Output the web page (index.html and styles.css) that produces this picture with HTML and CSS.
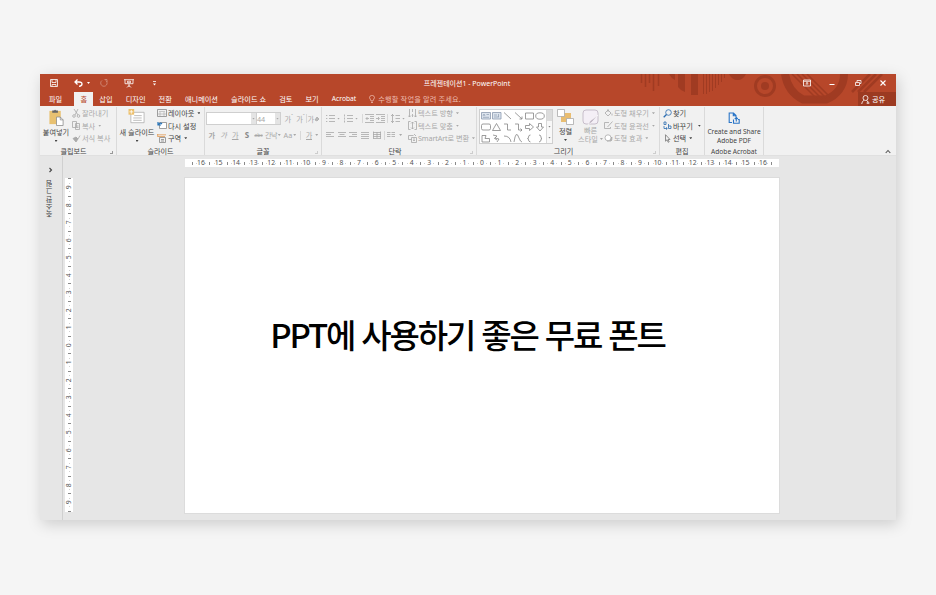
FILE: index.html
```
<!DOCTYPE html>
<html lang="ko">
<head>
    <meta charset="UTF-8">
    <meta name="viewport" content="width=device-width, initial-scale=1.0">
    <title>프레젠테이션1 - PowerPoint</title>
    <link rel="stylesheet" href="styles.css">
</head>
<body>
    <div class="window">
        <header class="header">
            <svg class="art" viewBox="0 0 260 32" width="260" height="32">
                <path d="M5.500 0v9M9.500 0v13M13.500 0v9M17.500 0v17M22.500 0v12" stroke-width="1.500"/>
                <path d="M33 0h6v6q-4-2-6-6zM42 0h7v18q-5-2-7-5zM55 0h7v21h-7z" class="fill"/>
                <path d="M67.500 0v20M70.500 0v20M73.500 0v18M76.500 0v17M79.500 0v14M82.500 0v11M85.500 0v8M88.500 0v4" stroke-width="1"/>
                <path d="M93 0h17q-3 6-8.500 6T93 0z" class="fill"/>
                <circle cx="129" cy="12" r="9.500" stroke-width="3"/>
                <circle cx="129" cy="12" r="4" class="fill"/>
                <path d="M149 0C151 13 158 21 167 25.500H190C201 21 208 12 208 0" stroke-width="8"/>
                <path d="M156 0l25 25M161 0l25 25M166 0l24 24M171 0l23 23" stroke-width="1.500"/>
                <path d="M216 18L234 0M222 18L240 0M228 18L246 0" stroke-width="2.500"/>
            </svg>
            <div class="titlebar">
                <div class="quick">
                    <svg width="8" height="8" viewBox="0 0 8 8"><path d="M.5.500h7v7h-7zM2 .5V3.500h4V.5M2 7.500V5.500h4v2"/></svg>
                    <svg class="undo" width="9" height="8" viewBox="0 0 9 8"><path d="M3.500.500L1 3l2.500 2.500M1 3h4q3 0 3 2t-3 2.300" stroke-width="1.300"/></svg>
                    <i class="caret"></i>
                    <svg class="redo faded" width="8" height="8" viewBox="0 0 8 8"><path d="M5.500 1.300A3.200 3.200 0 1 1 2 1.500M4.500.500h2.500v2.500"/></svg>
                    <svg class="show" width="10" height="9" viewBox="0 0 10 9"><path d="M0 .7h10M1 .7v4h8v-4M5 5v3M3 8.500l2-2 2 2M3.500 2.200h3v1.500h-3z"/></svg>
                    <svg width="3" height="5" viewBox="0 0 3 5"><path d="M0 .5h3"/><path d="M0 2.500h3L1.500 4.500z" fill="#fff" stroke="none"/></svg>
                </div>
                <div class="title">프레젠테이션1 - PowerPoint</div>
                <div class="controls">
                    <svg width="8" height="8" viewBox="0 0 8 8"><path d="M.5 1h7v6h-7zM.5 2.300h7M4 6V3.500M2.700 4.700L4 3.500l1.300 1.200"/></svg>
                    <svg width="8" height="8" viewBox="0 0 8 8"><path d="M1.500 5.500h5" stroke-width="1"/></svg>
                    <svg width="8" height="8" viewBox="0 0 8 8"><path d="M1.500 3.500h4v3h-4zM3 3V1.500h4v3H6"/></svg>
                    <svg width="8" height="8" viewBox="0 0 8 8"><path d="M1.500 1.500l5 5M6.500 1.500l-5 5" stroke-width="1.100"/></svg>
                </div>
            </div>
            <nav class="tabs">
                <span>파일</span>
                <span class="active">홈</span>
                <span>삽입</span>
                <span>디자인</span>
                <span>전환</span>
                <span>애니메이션</span>
                <span>슬라이드 쇼</span>
                <span>검토</span>
                <span>보기</span>
                <span class="latin">Acrobat</span>
                <span class="tell"><svg width="6" height="9" viewBox="0 0 6 9"><path d="M2 6Q2 5 1.200 4.200A2.400 2.400 0 1 1 4.800 4.200Q4 5 4 6zM2 7.500h2"/></svg>수행할 작업을 알려 주세요.</span>
                <span class="share"><svg width="9" height="9" viewBox="0 0 9 9"><circle cx="4.500" cy="3" r="2.500"/><path d="M.7 9Q1 6 3.200 5.200M5.500 5.200L7 7M5.500 8h3M7 6.500v3"/></svg>공유</span>
            </nav>
        </header>

        <div class="ribbon">
            <section class="group clipboard">
                <div class="body">
                    <div class="big paste">
                        <svg width="17" height="18" viewBox="0 0 17 18"><path d="M1 2h12v14H1z" fill="#e8c171" stroke="none"/><path d="M4 1.500h2Q7 0 8 1.500h2v2.500H4z" fill="#666" stroke="none"/><path d="M8.500 8.500h4l3 3v6h-7z" fill="#fff" stroke="#888" stroke-width=".8"/><path d="M12.500 8.500v3h3" stroke="#888" stroke-width=".8" fill="none"/></svg>
                        <b>붙여넣기</b><i class="caret"></i>
                    </div>
                    <div class="rows dim">
                        <span><svg width="9" height="9" viewBox="0 0 9 9"><path d="M2 0l4 6M6 0L3 6"/><circle cx="2" cy="7" r="1.300"/><circle cx="6.500" cy="7" r="1.300"/></svg>잘라내기</span>
                        <span><svg width="9" height="9" viewBox="0 0 9 9"><path d="M.5.500h4v6h-4zM3.500 2.500h4v6h-4zM4.500 5h2M4.500 6.500h2"/></svg>복사 <i class="caret"></i></span>
                        <span><svg width="9" height="9" viewBox="0 0 9 9"><path d="M4 3l2 2 2-3.500"/><path d="M1 4.500l3-1.500 2 2-2 3z" fill="#aaa"/></svg>서식 복사</span>
                    </div>
                </div>
                <div class="label">클립보드<i class="launch"></i></div>
            </section>

            <section class="group slides">
                <div class="body">
                    <div class="big newslide">
                        <svg width="18" height="18" viewBox="0 0 18 18"><path d="M2.500 3.500h14v11h-14z" fill="#fff" stroke="#aaa"/><path d="M6 7h8M5 9.500h9M5 12h9" stroke="#aaa" fill="none"/><path d="M0 0h6v6H0z" fill="#edc06c" stroke="none"/><path d="M3 1v4M1 3h4" stroke="#fff"/></svg>
                        <b>새 슬라이드</b><i class="caret"></i>
                    </div>
                    <div class="rows">
                        <span><svg width="10" height="9" viewBox="0 0 10 9"><path d="M.5.500h9v7h-9z" stroke="#888"/><path d="M2 2.500h6M2 4h2v2H2zM6 4h2v2H6z" stroke="#aaa" stroke-width=".6"/></svg>레이아웃<i class="caret"></i></span>
                        <span><svg width="10" height="9" viewBox="0 0 10 9"><path d="M2.500 1.500h7v6h-7z" fill="#fff" stroke="#888"/><path d="M1 1v3h3M1 4Q3 1 5 3" stroke="#2472b8" stroke-width="1.200"/></svg>다시 설정</span>
                        <span><svg width="10" height="9" viewBox="0 0 10 9"><path d="M2.500 3.500h6v5h-6zM4 5.500h3M4 7h3" stroke="#888"/><path d="M0 .8h9M.7 0v3M1 2.500h7" stroke="#e09b55"/></svg>구역<i class="caret"></i></span>
                    </div>
                </div>
                <div class="label">슬라이드</div>
            </section>

            <section class="group font">
                <div class="body stack">
                    <div class="line">
                        <div class="select family"><i class="caret"></i></div>
                        <div class="select size">44<i class="caret"></i></div>
                        <span class="tool grow">가<sup>ˆ</sup></span>
                        <span class="tool shrink">가<sup>ˇ</sup></span>
                        <i class="rule"></i>
                        <span class="tool clear">가<svg width="6" height="6" viewBox="0 0 6 6"><path d="M1 4l2-3 2 2-2 2z" fill="#bbb"/></svg></span>
                    </div>
                    <div class="line second">
                        <span class="tool strong">가</span>
                        <span class="tool italic">가</span>
                        <span class="tool under">가</span>
                        <span class="tool shadow">S</span>
                        <span class="tool strike">abc</span>
                        <span class="tool wide kern">간낙<i class="caret"></i></span>
                        <span class="tool wide case">Aa<i class="caret"></i></span>
                        <i class="rule"></i>
                        <span class="tool wide color"><u>가</u><i class="caret"></i></span>
                    </div>
                </div>
                <div class="label">글꼴<i class="launch pale"></i></div>
            </section>

            <section class="group paragraph">
                <div class="body">
                    <div class="stack">
                        <div class="line">
                            <svg class="list" width="9" height="9" viewBox="0 0 9 9"><path d="M3 1.500h6M3 4.500h6M3 7.500h6M0 1.500h1.300M0 4.500h1.300M0 7.500h1.300"/></svg><i class="caret"></i>
                            <svg class="list" width="9" height="9" viewBox="0 0 9 9"><path d="M3 1.500h6M3 4.500h6M3 7.500h6M.5.500v2M.5 3.500v2M.5 6.500v2"/></svg><i class="caret"></i>
                            <i class="rule"></i>
                            <svg class="indent" width="9" height="9" viewBox="0 0 9 9"><path d="M0 .5h9M5 2.500h4M5 4.500h4M5 6.500h4M0 8.500h9M4 4.500H1M2.500 3L1 4.500 2.500 6"/></svg>
                            <svg class="indent" width="9" height="9" viewBox="0 0 9 9"><path d="M0 .5h9M5 2.500h4M5 4.500h4M5 6.500h4M0 8.500h9M0 4.500h3M2 3l1.500 1.500L2 6"/></svg>
                            <i class="rule"></i>
                            <svg class="spacing" width="9" height="9" viewBox="0 0 9 9"><path d="M4.500 1.500H9M4.500 4.500H9M4.500 7.500H9M1.500 0v9M0 2L1.500.500 3 2M0 7l1.500 1.500L3 7"/></svg><i class="caret"></i>
                        </div>
                        <div class="line second aligns">
                            <svg width="8" height="8" viewBox="0 0 8 8"><path d="M0 1.500h8M0 3.500h5M0 5.500h8"/></svg>
                            <svg width="8" height="8" viewBox="0 0 8 8"><path d="M0 1.500h8M1.500 3.500h5M0 5.500h8"/></svg>
                            <svg width="8" height="8" viewBox="0 0 8 8"><path d="M0 1.500h8M3 3.500h5M0 5.500h8"/></svg>
                            <svg width="8" height="8" viewBox="0 0 8 8"><path d="M0 1.500h8M0 3.500h8M0 5.500h8M0 7.500h8"/></svg>
                            <svg width="8" height="8" viewBox="0 0 8 8"><path d="M.5.500v7M7.500.500v7M0 1.500h8M0 3.500h8M0 5.500h8M0 7.500h8M4 1v6"/></svg>
                            <i class="rule"></i>
                            <svg width="8" height="8" viewBox="0 0 8 8"><path d="M0 1.500h3.500M4.500 1.500H8M0 3.500h3.500M4.500 3.500H8M0 5.500h3.500M4.500 5.500H8"/></svg><i class="caret"></i>
                        </div>
                    </div>
                    <div class="rows dim">
                        <span><svg width="9" height="9" viewBox="0 0 9 9"><path d="M1.500 0v8M0 6.500L1.500 8 3 6.500M4.500 0v3M7.500 0v8M4.500 5v3M6 6.500L7.500 8 9 6.500"/></svg>텍스트 방향<i class="caret"></i></span>
                        <span><svg width="9" height="9" viewBox="0 0 9 9"><path d="M2.500.500h-2v8h2M6.500.500h2v8h-2M4.500 1v7M3 2.500L4.500 1 6 2.500M3 6.500L4.500 8 6 6.500"/></svg>텍스트 맞춤<i class="caret"></i></span>
                        <span class="smart"><svg width="9" height="9" viewBox="0 0 9 9"><path d="M.5 1.500h5M.5 1.500v4h3M3.500 3.500h5v5h-5zM5 5h2M5 6.500h2M6 0l2 2"/></svg>SmartArt로 변환<i class="caret"></i></span>
                    </div>
                </div>
                <div class="label">단락<i class="launch pale"></i></div>
            </section>

            <section class="group drawing">
                <div class="body">
                    <div class="gallery">
                        <svg width="66" height="34" viewBox="0 0 66 34">
                            <path d="M1.500 2.500h9v6.500h-9zM12.500 2.500h8.500v6.500h-8.500z" fill="#dce4ee" stroke="#8b9bb0"/>
                            <path d="M3 6l1-2 1 2M6.500 4.500h2.500M3 7.300h6M14 5h3M14 7h5M18.500 4v3" stroke="#8b9bb0" stroke-width=".7"/>
                            <path d="M24 2.500l7 6.500M35 2.500l7 6.500M42 6.500V9h-2.500M45.500 3h8v6h-8z"/>
                            <ellipse cx="60" cy="6" rx="4.300" ry="3.200"/>
                            <rect x="1.500" y="14" width="9" height="6" rx="1.500"/>
                            <path d="M16.500 13.500l4 7h-8zM24 14h3.500v6H31M35 14h3.500v6H42M40.500 18.500L42 20l-1.500 1.500M45.500 15.500h4v-2l4 3.500-4 3.500v-2h-4zM58.500 13.500h3v3.500h2l-3.500 4-3.500-4h2z"/>
                            <path d="M2 25.500h4l-1 3h4.500V32H2zM13 25l4 1-2 2 4 1-2 3M14 28l3 2M24 26q6 0 7 6M34 32q2-13 5-4 1.500 4 3 4M50.500 25q-2 0-2 2t-1 1.500q1 0 1 1.500t2 2M59 25q2 0 2 2t1 1.500q-1 0-1 1.500t-2 2"/>
                        </svg>
                        <div class="scroll"><i></i><i class="caret"></i><i class="caret"></i></div>
                    </div>
                    <div class="big arrange">
                        <svg width="17" height="17" viewBox="0 0 17 17"><path d="M4 4h10v9H4z" fill="#e9bd70" stroke="none"/><path d="M.5.500h7v7h-7zM9.500 9.500h7v6h-7z" fill="#fff" stroke="#aaa"/></svg>
                        <b>정렬</b><i class="caret"></i>
                    </div>
                    <div class="big quickstyle dim">
                        <svg width="17" height="17" viewBox="0 0 17 17"><rect x="1" y="1" width="15" height="14" rx="3" fill="#f4eff6" stroke="#bcb2c0"/><path d="M16 6l-6 7-4 3 2-4z" fill="#b9aebd" stroke="#fff" stroke-width=".6"/></svg>
                        <b>빠른<br>스타일<i class="caret"></i></b>
                    </div>
                    <div class="rows dim">
                        <span><svg width="9" height="9" viewBox="0 0 9 9"><path d="M1 4l3-3 3 3-3 3zM4 3V0M8 4.500v2"/></svg>도형 채우기<i class="caret"></i></span>
                        <span><svg width="9" height="9" viewBox="0 0 9 9"><path d="M5 1.500H.5v6h6V6M3.500 6L8.500.500"/></svg>도형 윤곽선<i class="caret"></i></span>
                        <span><svg width="9" height="9" viewBox="0 0 9 9"><path d="M3 7h4q1 0 1-4L6 5z" fill="#bbb"/><circle cx="4" cy="3.800" r="3" fill="#fff"/></svg>도형 효과<i class="caret"></i></span>
                    </div>
                </div>
                <div class="label">그리기<i class="launch pale"></i></div>
            </section>

            <section class="group editing">
                <div class="body">
                    <div class="rows">
                        <span><svg width="9" height="9" viewBox="0 0 9 9"><circle cx="5.500" cy="3.500" r="2.800" stroke="#2b6cb0"/><path d="M3.500 5.500L.7 8.300" stroke="#2b6cb0" stroke-width="1.300"/></svg>찾기</span>
                        <span><svg width="9" height="9" viewBox="0 0 9 9"><path d="M1 1h2v2.500H1zM1 5v2.500h3M3 6.300l1.300 1.200L3 8.700M5.500 3v4.500H8V5H5.500" stroke="#2b6cb0"/></svg>바꾸기<i class="caret far"></i></span>
                        <span><svg width="9" height="9" viewBox="0 0 9 9"><path d="M2.500.700v6.500L4 5.800l1.200 2.500 1-.5L5 5.500h2z" stroke="#777"/></svg>선택<i class="caret"></i></span>
                    </div>
                </div>
                <div class="label">편집</div>
            </section>

            <section class="group acrobat">
                <div class="body">
                    <div class="pdf">
                        <svg width="12" height="12" viewBox="0 0 12 12"><path d="M4 10.500H1.200V1H5.500L8 3.500V5M5.300 1v2.700H8M5.500 7.500v3.700h5.700V7.500H10M8.300 9.500V5.500M6.800 7l1.500-1.500L9.800 7" stroke="#2a75c7" stroke-width="1.100"/></svg>
                        <div>Create and Share<br>Adobe PDF</div>
                    </div>
                </div>
                <div class="label">Adobe Acrobat</div>
            </section>
            <svg class="collapse" width="6" height="5" viewBox="0 0 6 5"><path d="M.7 4L3 1.500 5.300 4" stroke="#555" stroke-width="1.100"/></svg>
        </div>

        <main class="workspace">
            <aside class="thumbs">
                <svg width="5" height="6" viewBox="0 0 5 6"><path d="M1.500 1l2 2-2 2" stroke="#444" stroke-width="1.100"/></svg>
                <span>축소판 그림</span>
            </aside>
            <div class="ruler vertical" data-max="9"></div>
            <div class="stage">
                <div class="ruler horizontal" data-max="16"></div>
                <div class="slide"><h1>PPT에 사용하기 좋은 무료 폰트</h1></div>
            </div>
        </main>
    </div>

    <script>
        // Fill both rulers: number, dot, tick, dot, number...
        document.querySelectorAll('.ruler').forEach(function(ruler) {
            const max = Number(ruler.dataset.max);
            let html = '<i class="tick"></i><i class="dot"></i>';
            for (let n = -max; n <= max; n++) {
                html += `<span>${Math.abs(n)}</span><i class="dot"></i><i class="tick"></i>`;
                if (n < max) {
                    html += '<i class="dot"></i>';
                }
            }
            ruler.innerHTML = html;
        });
    </script>
</body>
</html>
```
FILE: styles.css
```
* {
    box-sizing: border-box;
}
body {
    margin: 0;
    padding: 74px 40px 75px;
    height: 595px;
    overflow: hidden;
    background-color: #f5f5f5;
    font-family: "Noto Sans", "Noto Sans CJK KR", sans-serif;
    font-size: 7.2px;
    line-height: 10px;
    color: #444;
}
svg {
    display: block;
    flex: none;
    fill: none;
    stroke: currentColor;
    stroke-width: 0.8;
}
i {
    font-style: normal;
}
.window {
    width: 856px;
    height: 446px;
    background: #e6e6e6;
    box-shadow: 2px 4px 14px rgba(0, 0, 0, 0.17);
}

/* title bar and tabs */
.header {
    position: relative;
    height: 32px;
    background: #b7472a;
    color: #fff;
}
.art {
    position: absolute;
    top: 0;
    right: 0;
    stroke: #a03b22;
}
.art .fill {
    fill: #a03b22;
    stroke: none;
}
.titlebar {
    position: relative;
    display: grid;
    grid-template-columns: 1fr auto 1fr;
    align-items: center;
    height: 18px;
    font-size: 7px;
}
.title {
    padding: 1px 2px 0 0;
}
.quick {
    display: flex;
    align-items: center;
    padding-left: 10px;
}
.undo {
    margin: 0 4px 0 16px;
}
.redo {
    margin-left: 10px;
}
.show {
    margin: 0 19px 0 16px;
}
.faded {
    opacity: 0.4;
}
.controls {
    display: flex;
    justify-content: flex-end;
    gap: 17.500px;
    padding-right: 9px;
}
.caret {
    display: inline-block;
    flex: none;
    width: 3px;
    height: 2px;
    background: currentColor;
    clip-path: polygon(0 0, 100% 0, 50% 100%);
}
.tabs {
    position: relative;
    display: flex;
    height: 14px;
    line-height: 14px;
    padding-left: 9px;
    font-size: 7.2px;
    white-space: nowrap;
}
.tabs span {
    margin-right: 13.100px;
}
.tabs .active {
    width: 19px;
    margin-right: 6px;
    margin-left: -1px;
    background: #f1f1f1;
    color: #b7472a;
    text-align: center;
}
.tabs .latin {
    font-size: 6.7px;
}
.tabs .tell {
    display: flex;
    align-items: center;
    gap: 3px;
    letter-spacing: 0.15px;
    color: #eebdb0;
}
.tabs .share {
    display: flex;
    align-items: center;
    gap: 2px;
    width: 38px;
    margin: 0 0 0 auto;
    padding-left: 3px;
    background: #9c3a21;
}

/* ribbon */
.ribbon {
    display: flex;
    height: 50px;
    background: #f1f1f1;
    border-bottom: 1px solid #e0e0e0;
}
.group {
    display: flex;
    flex-direction: column;
    flex: none;
    margin-top: 1px;
    height: 48px;
    border-right: 1px solid #dadada;
    white-space: nowrap;
}
.body {
    display: flex;
    flex: none;
    height: 39px;
}
.label {
    position: relative;
    height: 9px;
    line-height: 11px;
    text-align: center;
    font-size: 7.1px;
}
.launch {
    position: absolute;
    right: 3px;
    bottom: 1px;
    width: 3px;
    height: 3px;
    border: solid #999;
    border-width: 0 1px 1px 0;
}
.pale {
    opacity: 0.4;
}
.dim {
    color: #a8a8a8;
}
.big {
    display: flex;
    flex-direction: column;
    align-items: center;
    padding-top: 2px;
}
.big b {
    font-weight: 400;
    line-height: 9px;
    text-align: center;
}
.big > svg {
    height: 17px;
}
.big > .caret {
    margin-top: 3px;
}
.rows {
    display: flex;
    flex-direction: column;
}
.rows span {
    display: flex;
    align-items: center;
    height: 12.500px;
    gap: 1px;
}
.rows .caret {
    margin-left: 2px;
}
.rows .caret.far {
    margin-left: 4px;
}
.clipboard {
    width: 77px;
}
.paste {
    width: 32px;
}
.paste b {
    margin-top: 2px;
}
.clipboard .label {
    padding-right: 9px;
}
.slides {
    width: 88px;
}
.newslide {
    width: 40px;
}
.newslide b {
    margin-top: 2px;
}
.font {
    width: 117px;
}
.stack {
    display: flex;
    flex-direction: column;
}
.line {
    display: flex;
    align-items: center;
    height: 13px;
    margin-top: 5px;
    color: #a8a8a8;
}
.line.second {
    height: 12px;
    margin-top: 4px;
}
.font .line {
    padding-left: 1px;
}
.select {
    display: flex;
    align-items: center;
    height: 13px;
    border: 1px solid #cfcfcf;
    background: linear-gradient(to left, #e4e4e4 5px, #fff 5px);
    padding-right: 1px;
}
.select .caret {
    margin-left: auto;
}
.family {
    width: 51px;
}
.size {
    width: 25px;
    margin-left: -1px;
}
.tool {
    display: flex;
    justify-content: center;
    align-items: center;
    width: 11.700px;
}
.tool sup {
    font-size: 5px;
    line-height: 4px;
    align-self: flex-start;
}
.grow {
    margin-left: 2px;
}
.clear {
    width: 13px;
}
.rule {
    width: 1px;
    height: 9px;
    background: #d8d8d8;
}
.strong {
    font-weight: 700;
}
.italic {
    font-style: italic;
}
.under {
    text-decoration: underline;
}
.shadow {
    font-size: 8px;
    font-weight: 700;
    color: #888;
}
.strike {
    font-size: 5px;
    text-decoration: line-through;
}
.wide {
    width: 17px;
    gap: 1px;
}
.kern {
    letter-spacing: -0.8px;
}
.font .second .rule {
    margin: 0 2px;
}
.color {
    gap: 3px;
}
.color u {
    line-height: 8px;
    text-decoration: none;
    border-bottom: 1px solid #a8a8a8;
}
.paragraph {
    width: 155px;
}
.paragraph .stack {
    width: 86px;
    padding-left: 4px;
}
.list {
    margin-right: 2px;
}
.list + .caret {
    margin-right: 4px;
}
.indent {
    margin-left: 2px;
}
.indent + .rule {
    margin: 0 3px 0 2px;
}
.spacing {
    margin-right: 2px;
}
.aligns svg {
    margin-right: 3.700px;
}
.aligns .rule {
    margin-right: 2px;
}
.smart {
    letter-spacing: -0.1px;
}
.paragraph .label {
    padding-right: 8px;
}
.drawing {
    width: 183px;
}
.gallery {
    display: flex;
    width: 74px;
    height: 35px;
    margin: 2px 0 0 2px;
    border: 1px solid #cfcfcf;
    background: #fff;
    color: #858585;
}
.scroll {
    display: grid;
    grid-template-rows: repeat(3, 11px);
    place-items: center;
    width: 6px;
    background: #f8f8f8;
    border-left: 1px solid #d8d8d8;
}
.scroll i:first-child {
    width: 5px;
    height: 11px;
    background: #dcdcdc;
}
.arrange {
    width: 25px;
}
.arrange b {
    margin-top: 1px;
}
.quickstyle {
    width: 25px;
}
.quickstyle b .caret {
    margin-left: 2px;
    vertical-align: 2px;
}
.drawing .rows {
    margin-left: 1px;
}
.drawing .label {
    padding-right: 9px;
}
.editing {
    width: 45px;
}
.editing .rows {
    padding-left: 3px;
}
.acrobat {
    width: 59px;
}
.pdf {
    display: flex;
    flex-direction: column;
    align-items: center;
    width: 58px;
    padding-top: 5px;
    text-align: center;
    line-height: 9px;
    font-size: 6.600px;
}
.pdf svg {
    margin-bottom: 3px;
}
.acrobat .label {
    font-size: 6.600px;
}
.collapse {
    margin: 43px 5px 0 auto;
}

/* workspace */
.workspace {
    display: flex;
    height: 364px;
}
.thumbs {
    display: flex;
    flex-direction: column;
    align-items: center;
    gap: 7px;
    width: 23px;
    padding-top: 11px;
    padding-right: 2px;
    border-right: 1px solid #d0d0d0;
}
.thumbs span {
    writing-mode: vertical-rl;
    transform: rotate(180deg);
    font-size: 7px;
}
.ruler {
    display: flex;
    align-items: center;
    justify-content: center;
    background: #fff;
    font-size: 6.800px;
    color: #555;
}
.ruler > * {
    display: flex;
    align-items: center;
    justify-content: center;
    flex: none;
    width: 4.400px;
    height: 8px;
}
.ruler i::before {
    content: "";
    width: 1px;
    height: 1px;
    background: #d0d0d0;
}
.ruler .tick::before {
    height: 3px;
    background: #8a8a8a;
}
.horizontal {
    width: 594px;
    height: 8px;
    margin-top: 3px;
}
.vertical {
    flex-direction: column;
    width: 8px;
    height: 334px;
    margin: 22px 0 0 2px;
}
.vertical > * {
    width: 8px;
    height: 4.390px;
}
.vertical span {
    transform: rotate(-90deg);
}
.vertical .tick::before {
    width: 3px;
    height: 1px;
}
.stage {
    margin-left: 112px;
}
.slide {
    display: flex;
    align-items: center;
    justify-content: center;
    width: 594px;
    height: 335px;
    margin-top: 11px;
    padding: 0 29px 24px 0;
    background: #fff;
    outline: 1px solid #dcdcdc;
}
h1 {
    margin: 0;
    font-family: "Noto Sans CJK KR", sans-serif;
    font-size: 33px;
    line-height: 48px;
    font-weight: 500;
    letter-spacing: -2.150px;
    color: #000;
    white-space: nowrap;
}
```
